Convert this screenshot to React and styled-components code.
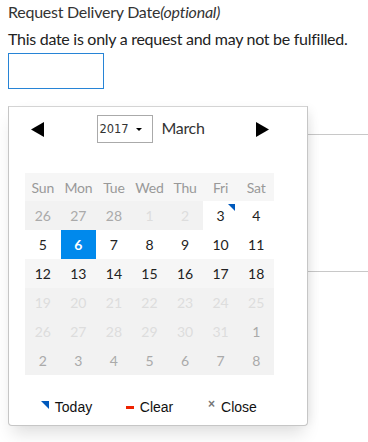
import React from 'react';
import styled, { createGlobalStyle } from 'styled-components';

const GlobalStyle = createGlobalStyle`
  body {
    margin: 0;
    background: #fff;
    font-family: Lato, "Liberation Sans", sans-serif;
    color: #222;
  }
`;

const weekdays = ['Sun', 'Mon', 'Tue', 'Wed', 'Thu', 'Fri', 'Sat'];

// kind: prev (previous/next month, mid gray), off (disabled, pale), on (enabled)
const weeks = [
  [
    { n: 26, kind: 'prev' }, { n: 27, kind: 'prev' }, { n: 28, kind: 'prev' },
    { n: 1, kind: 'off' }, { n: 2, kind: 'off' },
    { n: 3, kind: 'on', today: true }, { n: 4, kind: 'on' },
  ],
  [5, 6, 7, 8, 9, 10, 11].map((n) => ({ n, kind: 'on', selected: n === 6 })),
  [12, 13, 14, 15, 16, 17, 18].map((n) => ({ n, kind: 'on', striped: true })),
  [19, 20, 21, 22, 23, 24, 25].map((n) => ({ n, kind: 'off' })),
  [
    ...[26, 27, 28, 29, 30, 31].map((n) => ({ n, kind: 'off' })),
    { n: 1, kind: 'prev' },
  ],
  [2, 3, 4, 5, 6, 7, 8].map((n) => ({ n, kind: 'prev' })),
];

const App = () => {
  return (
    <Page>
      <GlobalStyle />
      <Label>
        Request Delivery Date<em>(optional)</em>
      </Label>
      <Hint>This date is only a request and may not be fulfilled.</Hint>
      <DateInput />
      <Rule $top={45} />
      <Rule $top={136} />

      <Picker>
        <Inner>
          <Header>
            <Arrow aria-label="Previous month">
              <svg width="13" height="15" viewBox="0 0 13 15">
                <polygon points="0,7.5 13,0 13,15" fill="#000" />
              </svg>
            </Arrow>
            <MonthYear>
              <YearSelect>
                <span>2017</span>
                <Caret />
              </YearSelect>
              <Month>March</Month>
            </MonthYear>
            <Arrow aria-label="Next month">
              <svg width="13" height="15" viewBox="0 0 13 15">
                <polygon points="13,7.5 0,0 0,15" fill="#000" />
              </svg>
            </Arrow>
          </Header>

          <Table>
            <thead>
              <tr>
                {weekdays.map((d) => (
                  <Weekday key={d}>{d}</Weekday>
                ))}
              </tr>
            </thead>
            <tbody>
              {weeks.map((week, i) => (
                <tr key={i}>
                  {week.map((day, j) => (
                    <Day
                      key={j}
                      $kind={day.kind}
                      $selected={day.selected}
                      $striped={day.striped}
                    >
                      {day.n}
                      {day.today && <TodayFlag />}
                    </Day>
                  ))}
                </tr>
              ))}
            </tbody>
          </Table>

          <Footer>
            <FooterButton>
              <TodayIcon />
              Today
            </FooterButton>
            <FooterButton>
              <ClearIcon />
              Clear
            </FooterButton>
            <FooterButton>
              <CloseIcon>×</CloseIcon>
              Close
            </FooterButton>
          </Footer>
        </Inner>
      </Picker>
    </Page>
  );
};

const Page = styled.div`
  position: relative;
  padding: 2px 0 0 8px;
  height: 442px;
  box-sizing: border-box;
  overflow: hidden;
`;

const Label = styled.div`
  font-size: 16px;
  line-height: 20px;
  letter-spacing: -0.25px;
  color: #333;
  em {
    font-style: italic;
  }
`;

const Hint = styled.p`
  margin: 7px 0 0;
  font-size: 16px;
  line-height: 20px;
  letter-spacing: -0.28px;
  color: #222;
`;

const DateInput = styled.div`
  margin-top: 4px;
  width: 96px;
  height: 36px;
  box-sizing: border-box;
  border: 1px solid #2784d6;
  background: #fff;
`;

const Rule = styled.div`
  margin-top: ${({ $top }) => $top}px;
  border-top: 1px solid #c8c8c8;
`;

const Picker = styled.div`
  position: absolute;
  left: 8px;
  top: 106px;
  width: 300px;
  height: 320px;
  box-sizing: border-box;
  background: #fff;
  border: 1px solid #c6c6c6;
  border-top-color: #d4d4d4;
  border-radius: 0 0 4px 4px;
  box-shadow: 0 12px 16px -4px rgba(0, 0, 0, 0.12), 6px 0 10px -4px rgba(0, 0, 0, 0.08);
`;

const Inner = styled.div`
  width: 249px;
  margin-left: 16px;
`;

const Header = styled.div`
  height: 44px;
  display: flex;
  align-items: center;
  justify-content: space-between;
  padding: 0 5px 0 6px;
`;

const Arrow = styled.div`
  display: flex;
  width: 13px;
  height: 15px;
`;

const MonthYear = styled.div`
  display: flex;
  align-items: center;
  gap: 8px;
  margin-left: 2px;
`;

const YearSelect = styled.div`
  width: 56px;
  height: 28px;
  box-sizing: border-box;
  border: 1px solid #aaa;
  display: flex;
  align-items: center;
  justify-content: space-between;
  padding: 0 10px 0 1px;
  font-family: "DejaVu Sans", Verdana, sans-serif;
  font-size: 11.5px;
  color: #333;
`;

const Caret = styled.span`
  width: 0;
  height: 0;
  border-left: 3px solid transparent;
  border-right: 3px solid transparent;
  border-top: 3px solid #000;
`;

const Month = styled.span`
  font-size: 16px;
  letter-spacing: -0.3px;
  color: #333;
  margin-bottom: 4px;
`;

const Table = styled.table`
  margin-top: 22px;
  width: 249px;
  border-collapse: collapse;
  table-layout: fixed;
  font-size: 14px;
`;

const Weekday = styled.th`
  height: 28px;
  padding: 0;
  font-weight: 400;
  letter-spacing: -0.2px;
  color: #999;
  background: #f6f6f6;
  text-align: center;
`;

const dayColor = ({ $kind, $selected }) => {
  if ($selected) return '#fff';
  if ($kind === 'on') return '#222';
  if ($kind === 'prev') return '#aaa';
  return '#ddd';
};

const dayBackground = ({ $kind, $selected, $striped }) => {
  if ($selected) return '#0089ec';
  if ($kind === 'on') return $striped ? '#f6f6f6' : '#fff';
  return '#f2f2f2';
};

const Day = styled.td`
  position: relative;
  height: 29px;
  padding: 0;
  text-align: center;
  color: ${dayColor};
  background: ${dayBackground};
  font-weight: ${({ $selected }) => ($selected ? 700 : 400)};
`;

const TodayFlag = styled.span`
  position: absolute;
  top: 3px;
  right: 3px;
  width: 0;
  height: 0;
  border-top: 7px solid #0059bc;
  border-left: 7px solid transparent;
`;

const Footer = styled.div`
  margin-top: 17px;
  height: 30px;
  display: grid;
  grid-template-columns: repeat(3, 1fr);
`;

const FooterButton = styled.div`
  display: flex;
  align-items: center;
  justify-content: center;
  gap: 6px;
  font-family: "Liberation Sans", Arial, sans-serif;
  font-size: 14px;
  color: #111;
`;

const TodayIcon = styled.span`
  width: 0;
  height: 0;
  border-top: 8px solid #0059bc;
  border-left: 8px solid transparent;
  margin-top: -5px;
`;

const ClearIcon = styled.span`
  width: 8px;
  height: 3px;
  background: #e20;
`;

const CloseIcon = styled.span`
  font-size: 12px;
  font-weight: 700;
  color: #777;
  margin-top: -6px;
`;

export default App;
